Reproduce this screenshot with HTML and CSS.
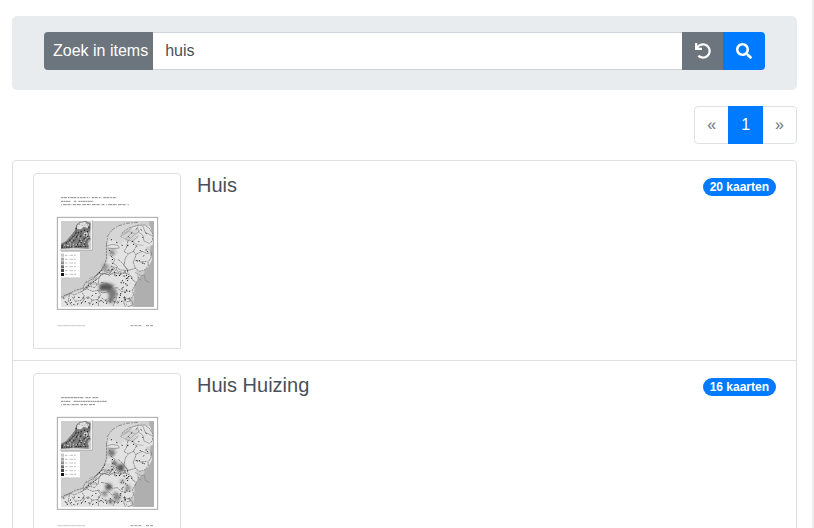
FILE: index.html
```html
<!DOCTYPE html>
<html lang="nl">
<head>
    <meta charset="UTF-8">
    <meta name="viewport" content="width=device-width, initial-scale=1.0">
    <title>Zoek in items</title>
    <link rel="stylesheet" href="styles.css">
</head>
<body>
    <!-- Shared parts of the map thumbnails -->
    <svg class="defs" aria-hidden="true">
        <defs>
            <filter id="soft" x="-50%" y="-50%" width="200%" height="200%">
                <feGaussianBlur stdDeviation="4"/>
            </filter>
            <clipPath id="mapArea">
                <rect x="111" y="168" width="279" height="258"/>
            </clipPath>
            <symbol id="map" viewBox="30 27 438 522">
                <rect x="100" y="157" width="301" height="276" fill="#fff" stroke="#a6a6a6" stroke-width="3"/>
                <g clip-path="url(#mapArea)">
                    <rect x="111" y="168" width="279" height="258" fill="#cdcdcd"/>
                    <!-- Germany -->
                    <path fill="#afafaf" d="M376 168h14v258h-62l6-80 26-20 20-80z"/>
                    <!-- Wadden sea and IJsselmeer -->
                    <path fill="#d6d6d6" d="M248 240l4-28 14-20 26-14 30-6 30-1-20 12-30 25-5 55-40 10z"/>
                    <!-- Land -->
                    <path fill="#e2e2e2" d="M290 213l14-16 24-12 30-6 20 5 10 30-2 26-22 8 16 14 4 22-12 24-20 12-16-6 4 30-10 20-2 30-16 8 12 20-4 16H111v-34l20-10 24-12 28-8 8-12 28-26 12-22 16-18 6-16-4-50 18-6 18 12 16-6z"/>
                    <path fill="#d3d3d3" d="M292 208l22-16 24 4 8 20-16 14-26-2zM252 250l22-2 8 14-12 14-18-4zM226 310l24-16 22 10-8 16-24 8z"/>
                    <g fill="none" stroke="#666" stroke-width="2">
                        <path stroke-dasharray="12 4 5 3" d="M247 240l5-28 12-17 18-12 26-8 34-3"/>
                        <path stroke-dasharray="7 2" d="M290 215l8-15 17-11 25-8 22-1 14 10 11 18-2 19-8 8M248 240l-1 42-7 20-12 18-19 20-25 13-8 17-22 6-22 12-21 9"/>
                        <path d="M248 243l16-5 18 3 4 8-16 2-20-2M258 258l12 8-8 9 11 8-6 11 13 10-4 13M340 184l4 18 12 8 4 18 16 7M356 182l8 20 20 10M290 215" stroke-width="1.5"/>
                        <path stroke-width="1.5" stroke="#888" d="M290 215l16 8 18 6 16 10 18 2M294 212l20-13 20 8 14-10M304 222l18-17M312 228l20-20M320 232l22-18M300 205l24-16"/>
                        <path stroke-dasharray="9 2 5 1" d="M312 226l-4 20-8 13 12 8 16-8 10-17M328 258l8 12-8 22 6 18-20 6-14-14 4-23 8-10M336 268l18-9 14 6 14-2-2 17-8 11 1 12-11 12-15 4-13-9M334 286l16 5 20-2M271 305l-13 12-20-3-12 7-14 13M282 283l14 12 16 22-22-2-14-8-12 8-8 13-31-3M225 335l16-10 15 6 14-9 19 6 15-4 16 8 7 14 10 6-6 13-6 11 4 13-10 15-16-5-4 13 7 18M225 335l-2 20-11 13-22-6M231 352l20 4 14 14 15-2 13 12 19-2M223 374l11 10 20-4 10 10 17-4M120 392l18-8 12 6 22-10 9 12-9 14-18 3-10-14M136 388l-3 20 11 14M172 380l17-9 16 8 17-3 8 13-8 14-17 3-12-11-12 7-9 14M188 371l8-16 13-5 10 6M205 404l-9 17M222 403l2 20M232 398l16 12 14-6 14 8 12-5M280 386l-4 19-9 18M300 402l8 9 15-5 4 14-14 5-9-9"/>
                        <path stroke-dasharray="4 3" d="M205 345l20-7 12-17M176 370l18-4 14-9 15 1M196 340l16-6 8 7-12 9M186 350l12 7 9-4M334 322l14 9 14 1 2 14 12 6M342 336l10 12M228 330l20-7 18 4 22-6 30 4M240 318l14 4 16-8 22 8"/>
                    </g>
                    <!-- Place dots -->
                    <g fill="none" stroke="#222" stroke-width="3" stroke-linecap="square" stroke-dasharray="1 13">
                        <path d="M256 256l9 4-8 10 11 9-7 12 8 8-17 17 17-3 6 20 19-8 18-10-7 24 19 0-30 17"/>
                        <path stroke-dasharray="1 17" d="M262 224l38 20 38-8 30-30-26-18-30 25 38 45 26-5-30 34 20 12-38-17"/>
                        <path stroke-dasharray="1 13" d="M272 330l45 5-30 17 27 7-25 12 30 7-36 10 25 11-34-2-40 12-18-24-24 15-40-4-25 18"/>
                        <path stroke-dasharray="1 11" d="M119 399l9 20 16-7 7 8 34-10 21 8 26-12 11 10 22-7 16 5 36-15"/>
                        <path stroke-dasharray="1 8" d="M216 345l-22 16-14 12M242 300l-9 15-14 16"/>
                    </g>
                </g>
                <!-- Inset map -->
                <path fill="#fff" d="M102 159h103v96H102z"/>
                <path fill="#cecece" d="M111 168h90v84h-90z"/>
                <path fill="#7c7c7c" d="M157 180l10-9 18-3 15 7-1 20-4 12 5 15-8 12 2 17-45-3-38 4v-16l16-9 14-16 11-14z"/>
                <path fill="#e1e1e1" d="M160 181l9-8 14-2 12 7-4 11-12-4-8 8-12-1zM181 201l12 1-3 13-12-3z"/>
                <g fill="none" stroke="#303030" stroke-width="4" stroke-dasharray="5 4 2 3">
                    <path d="M157 188v14l-10 14-14 14-20 13M164 201l-7 17-16 18-8 13M172 197l-3 26-13 23M181 193l4 23-17 21-6 12M196 185l-8 21 6 15-19 25M112 247l83-4"/>
                </g>
                <path fill="none" stroke="#c4c4c4" stroke-width="4" stroke-dasharray="3 6" d="M150 218l-20 27M162 215l12 12-11 14M185 223l-7 22M138 237l28 3M190 208l4 30M120 240l30 6"/>
                <path fill="none" stroke="#555" stroke-width="2" stroke-dasharray="3 6" d="M164 178l14 4 16-6M186 174l6 10"/>
                <path fill="none" stroke="#999" stroke-width="2" d="M205 165v90h-98"/>
                <!-- Legend -->
                <path fill="#fff" d="M107 261h61v76h-61z"/>
                <path fill="#c4c4c4" d="M111 266h9v9h-9z"/>
                <path fill="#a8a8a8" d="M111 278h9v9h-9z"/>
                <path fill="#8e8e8e" d="M111 289h9v9h-9z"/>
                <path fill="#6c6c6c" d="M111 301h9v9h-9z"/>
                <path fill="#484848" d="M111 312h9v9h-9z"/>
                <path fill="#151515" d="M111 324h9v9h-9z"/>
                <path fill="none" stroke="#bbb" stroke-width="3" stroke-dasharray="7 4 2 3 8 3" d="M123 271h32M123 283h32M123 294h32M123 305h32M123 317h32M123 328h35"/>
                <!-- Footer rules -->
                <path fill="none" stroke="#aaa" stroke-width="2" stroke-dasharray="12 1 5 1" d="M101 482h82"/>
                <path fill="none" stroke="#999" stroke-width="3" stroke-dasharray="9 3" d="M319 482h34M366 482h22"/>
            </symbol>
        </defs>
    </svg>

    <main class="page">
        <div class="search-panel">
            <form class="input-group">
                <label class="input-label" for="query">Zoek in items</label>
                <input class="search-input" type="text" id="query" value="huis">
                <button class="btn btn-secondary" type="reset" aria-label="Reset">
                    <svg class="icon" viewBox="0 0 512 512"><path d="M212.333 224.333H12c-6.627 0-12-5.373-12-12V12C0 5.373 5.373 0 12 0h48c6.627 0 12 5.373 12 12v78.112C117.773 39.279 184.26 7.47 258.175 8.007c136.906.994 246.448 111.623 246.157 248.532C504.041 393.258 393.12 504 256.333 504c-64.089 0-122.496-24.313-166.51-64.215-5.099-4.622-5.334-12.554-.467-17.42l33.967-33.967c4.474-4.474 11.662-4.717 16.401-.525C170.76 415.336 211.58 432 256.333 432c97.268 0 176-78.716 176-176 0-97.267-78.716-176-176-176-58.496 0-110.28 28.476-142.274 72.333h98.274c6.627 0 12 5.373 12 12v48c0 6.627-5.373 12-12 12z"/></svg>
                </button>
                <button class="btn btn-primary" type="submit" aria-label="Zoek">
                    <svg class="icon" viewBox="0 0 512 512"><path d="M505 442.7L405.3 343c-4.5-4.5-10.6-7-17-7H372c27.6-35.3 44-79.7 44-128C416 93.1 322.9 0 208 0S0 93.1 0 208s93.1 208 208 208c48.3 0 92.7-16.4 128-44v16.3c0 6.4 2.5 12.5 7 17l99.7 99.7c9.4 9.4 24.6 9.4 33.9 0l28.3-28.3c9.4-9.4 9.4-24.6.1-34zM208 336c-70.7 0-128-57.2-128-128 0-70.7 57.2-128 128-128 70.7 0 128 57.2 128 128 0 70.7-57.2 128-128 128z"/></svg>
                </button>
            </form>
        </div>

        <nav>
            <ul class="pagination">
                <li><a class="page-link" href="#">«</a></li>
                <li><a class="page-link active" href="#">1</a></li>
                <li><a class="page-link" href="#">»</a></li>
            </ul>
        </nav>

        <div class="list-group">
            <a class="list-item" href="#">
                <div class="thumb">
                    <svg viewBox="30 27 438 522">
                        <use href="#map" x="30" y="27" width="438" height="522"/>
                        <g fill="none" stroke="#8a8a8a" stroke-width="3">
                            <path stroke-dasharray="8 1 9 3 5 2" d="M111 98h86M203 98h29M238 98h39"/>
                            <path stroke-dasharray="7 1 5 1" d="M111 109h29M149 109h9M163 109h45"/>
                            <path stroke-dasharray="2 4 11 2 9 1" d="M111 119h130M247 119h67"/>
                        </g>
                        <g fill="#555" filter="url(#soft)">
                            <path d="M226 358l20-4 24 6-8 16-36 2z"/>
                            <path fill="#777" d="M246 378l30-8 2 16-14 30-14-8 6-18z"/>
                            <circle fill="#888" cx="244" cy="306" r="8"/>
                            <circle fill="#888" cx="264" cy="262" r="7"/>
                        </g>
                    </svg>
                </div>
                <h5 class="item-title">Huis</h5>
                <span class="badge">20 kaarten</span>
            </a>
            <a class="list-item" href="#">
                <div class="thumb">
                    <svg viewBox="30 27 438 522">
                        <use href="#map" x="30" y="27" width="438" height="522"/>
                        <g fill="none" stroke="#8a8a8a" stroke-width="3">
                            <path stroke-dasharray="10 1 7 1" d="M111 98h68M184 98h16M205 98h18"/>
                            <path stroke-dasharray="7 1 5 1" d="M111 109h29M149 109h100"/>
                            <path stroke-dasharray="2 4 9 2 8 1" d="M111 119h102"/>
                        </g>
                        <g fill="#555" filter="url(#soft)">
                            <circle cx="290" cy="308" r="11"/>
                            <circle cx="272" cy="295" r="7"/>
                            <circle cx="254" cy="366" r="10"/>
                            <circle fill="#777" cx="262" cy="263" r="10"/>
                            <path fill="#888" d="M270 378l12 8 10 8-6 12-14 2-4-14z"/>
                            <circle fill="#888" cx="242" cy="386" r="8"/>
                            <circle fill="#888" cx="295" cy="349" r="6"/>
                            <circle fill="#888" cx="312" cy="369" r="8"/>
                            <circle cx="260" cy="410" r="6"/>
                        </g>
                    </svg>
                </div>
                <h5 class="item-title">Huis Huizing</h5>
                <span class="badge">16 kaarten</span>
            </a>
        </div>
    </main>
</body>
</html>
```
FILE: styles.css
```css
* {
    box-sizing: border-box;
}
body {
    margin: 0;
    font-family: "Liberation Sans", Arial, sans-serif;
    font-size: 16px;
    line-height: 24px;
    color: #212529;
    background-color: #fff;
}
.defs {
    position: absolute;
    width: 0;
    height: 0;
}
.page {
    min-height: 100vh;
    padding: 16px 15px 0 12px;
    border-right: 2px solid #f0f0f0;
}
.search-panel {
    padding: 16px 32px 20px;
    margin-bottom: 16px;
    background-color: #e9ecef;
    border-radius: 5px;
}
.input-group {
    display: flex;
    height: 38px;
}
.input-label {
    padding: 7px 5px 7px 9px;
    color: #fff;
    background-color: #6c757d;
    border-radius: 4px 0 0 4px;
    white-space: nowrap;
}
.search-input {
    flex: 1;
    min-width: 0;
    padding: 6px 12px;
    font: inherit;
    color: #495057;
    background-color: #fff;
    border: 1px solid #ced4da;
    border-width: 1px 0;
}
.btn {
    display: flex;
    align-items: center;
    justify-content: center;
    width: 42px;
    padding: 0;
    color: #fff;
    border: none;
    cursor: pointer;
}
.btn-secondary {
    background-color: #6c757d;
}
.btn-primary {
    margin-left: -1px;
    background-color: #007bff;
    border-radius: 0 4px 4px 0;
}
.icon {
    width: 16px;
    height: 16px;
    fill: currentColor;
}
.pagination {
    display: flex;
    justify-content: flex-end;
    margin: 0 0 16px;
    padding: 0;
    list-style: none;
}
.page-link {
    display: block;
    position: relative;
    margin-left: -1px;
    padding: 6px 12px;
    color: #6c757d;
    background-color: #fff;
    border: 1px solid #dee2e6;
    text-decoration: none;
}
.pagination li:first-child .page-link {
    border-radius: 4px 0 0 4px;
}
.pagination li:last-child .page-link {
    border-radius: 0 4px 4px 0;
}
.page-link.active {
    z-index: 1;
    color: #fff;
    background-color: #007bff;
    border-color: #007bff;
}
.list-group {
    border: 1px solid #dfdfdf;
    border-radius: 4px;
}
.list-item {
    display: flex;
    align-items: flex-start;
    padding: 12px 20px 11px;
    color: #495057;
    text-decoration: none;
}
.list-item + .list-item {
    border-top: 1px solid #dfdfdf;
}
.thumb {
    width: 148px;
    margin-right: 16px;
    border: 1px solid #dfdfdf;
    border-radius: 4px 4px 0 0;
}
.thumb svg {
    display: block;
    width: 100%;
}
.item-title {
    flex: 1;
    margin: 0;
    font-size: 20px;
    font-weight: normal;
    line-height: 24px;
}
.badge {
    margin-top: 5px;
    padding: 3px 7px;
    font-size: 12px;
    font-weight: bold;
    line-height: 12px;
    color: #fff;
    background-color: #007bff;
    border-radius: 10px;
}
```
